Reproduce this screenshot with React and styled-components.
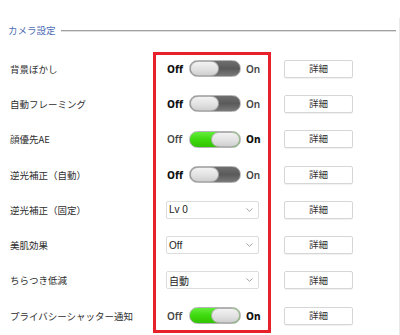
import React from "react";
import styled, { createGlobalStyle } from "styled-components";

const GlobalStyle = createGlobalStyle`
  html, body { margin: 0; padding: 0; background: #ffffff; }
  body { font-family: "Liberation Sans", "Noto Sans CJK JP", sans-serif; }
  * { box-sizing: border-box; }
`;

const Page = styled.div`
  width: 400px;
  height: 335px;
  overflow: hidden;
  background: #fff;
`;

const Panel = styled.section`
  position: relative;
  margin-top: 18px;
  height: 317px;
  border-right: 1px solid #e8e8e8;
`;

const Legend = styled.div`
  display: flex;
  align-items: center;
  height: 26px;
  padding-left: 8px;
  padding-right: 3px;
`;

const LegendTitle = styled.span`
  font-family: "Noto Sans CJK JP", sans-serif;
  font-size: 9.5px;
  color: #4d6db3;
  line-height: 1;
  white-space: nowrap;
`;

const LegendLine = styled.div`
  flex: 1;
  margin-left: 5px;
  margin-top: -1px;
  border-top: 1px solid #a0a0a0;
  border-bottom: 1px solid #dedede;
`;

const List = styled.div`
  margin-top: 7px;
  display: flex;
  flex-direction: column;
`;

const Row = styled.div`
  display: grid;
  grid-template-columns: 156px 118px 69px;
  align-items: center;
  height: 35.3px;
  padding-left: 10px;
`;

const Label = styled.span`
  font-family: "Noto Sans CJK JP", sans-serif;
  font-size: 9.5px;
  color: #2e2e2e;
  white-space: nowrap;
`;

const ToggleCell = styled.div`
  display: flex;
  align-items: center;
`;

const StateText = styled.span`
  font-family: "Noto Sans", "Liberation Sans", sans-serif;
  font-weight: ${(p) => (p.$active ? 800 : 600)};
  font-size: 10px;
  color: ${(p) => (p.$active ? "#111" : "#444")};
  width: ${(p) => p.$w}px;
  padding-left: ${(p) => p.$pl || 0}px;
`;

const Track = styled.div`
  width: 52px;
  height: 17px;
  border-radius: 9px;
  border: 1px solid #b4b4b4;
  display: flex;
  justify-content: ${(p) => (p.$on ? "flex-end" : "flex-start")};
  align-items: center;
  background: ${(p) =>
    p.$on
      ? "linear-gradient(to bottom, #62ee3a 0%, #3fd90e 50%, #30c400 100%)"
      : "linear-gradient(to bottom, #6f6f6f 0%, #5a5a5a 50%, #7a7a7a 100%)"};
  margin-right: 5px;
`;

const Knob = styled.div`
  width: 29px;
  height: 15px;
  border-radius: 8px;
  border: 1px solid #b0b0b0;
  background: linear-gradient(to bottom, #f2f2f2 0%, #e0e0e0 60%, #d0d0d0 100%);
`;

const SelectBox = styled.div`
  width: 93px;
  height: 18px;
  border: 1px solid #dcdcdc;
  border-radius: 2px;
  background: #fff;
  display: flex;
  align-items: center;
  justify-content: space-between;
  padding: 0 5px 0 2px;
  font-family: "Liberation Sans", "Noto Sans CJK JP", sans-serif;
  font-size: 10px;
  color: #222;
`;

const DetailButton = styled.button`
  width: 69px;
  height: 18px;
  padding: 0;
  border: 1px solid #d6d6d6;
  border-radius: 2px;
  background: #fff;
  box-shadow: 0 1px 1px rgba(0, 0, 0, 0.06);
  font-family: "Noto Sans CJK JP", sans-serif;
  font-size: 9.5px;
  color: #333;
  line-height: 1;
`;

const Highlight = styled.div`
  position: absolute;
  left: 153px;
  top: 34px;
  width: 118px;
  height: 281px;
  border: 3px solid #e8202a;
  pointer-events: none;
`;

const Chevron = () => (
  <svg width="7" height="4" viewBox="0 0 7 4">
    <path d="M0.5 0.5 L3.5 3.3 L6.5 0.5" fill="none" stroke="#9a9a9a" strokeWidth="0.9" />
  </svg>
);

const Toggle = ({ on }) => (
  <ToggleCell>
    <StateText $w={23} $pl={1} $active={!on}>Off</StateText>
    <Track $on={on}>
      <Knob />
    </Track>
    <StateText $w={20} $active={on}>On</StateText>
  </ToggleCell>
);

const Select = ({ value }) => (
  <SelectBox>
    <span>{value}</span>
    <Chevron />
  </SelectBox>
);

const rows = [
  { label: "背景ぼかし", type: "toggle", on: false },
  { label: "自動フレーミング", type: "toggle", on: false },
  { label: "顔優先AE", type: "toggle", on: true },
  { label: "逆光補正（自動）", type: "toggle", on: false },
  { label: "逆光補正（固定）", type: "select", value: "Lv 0" },
  { label: "美肌効果", type: "select", value: "Off" },
  { label: "ちらつき低減", type: "select", value: "自動" },
  { label: "プライバシーシャッター通知", type: "toggle", on: true },
];

export default function App() {
  return (
    <Page>
      <GlobalStyle />
      <Panel>
        <Legend>
          <LegendTitle>カメラ設定</LegendTitle>
          <LegendLine />
        </Legend>
        <List>
          {rows.map((r) => (
            <Row key={r.label}>
              <Label>{r.label}</Label>
              {r.type === "toggle" ? <Toggle on={r.on} /> : <Select value={r.value} />}
              <DetailButton>詳細</DetailButton>
            </Row>
          ))}
        </List>
        <Highlight />
      </Panel>
    </Page>
  );
}
